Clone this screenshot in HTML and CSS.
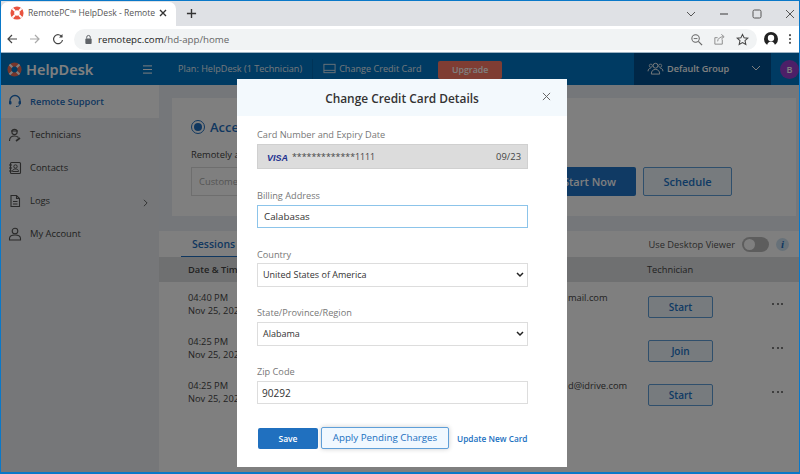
FILE: index.html
```html
<!DOCTYPE html>
<html lang="en">
<head>
<meta charset="utf-8">
<title>RemotePC HelpDesk</title>
<link rel="stylesheet" href="styles.css">
</head>
<body>
<div class="window">
  <div class="tabstrip">
    <div class="tab">
      <svg class="ico16" viewBox="0 0 16 16"><circle cx="8" cy="8" r="7.500" fill="#e8533f"/><circle cx="8" cy="8" r="3.200" fill="#fff"/><path d="M2.700 2.700l3 3M13.300 2.700l-3 3M2.700 13.300l3-3M13.300 13.300l-3-3" stroke="#fff" stroke-width="2.200"/></svg>
      <span class="tab-title">RemotePC™ HelpDesk - Remote</span>
      <svg class="tab-close" viewBox="0 0 10 10"><path d="M2 2l6 6M8 2l-6 6" stroke="#333" stroke-width="1.400"/></svg>
    </div>
    <svg class="newtab" viewBox="0 0 12 12"><path d="M6 1v10M1 6h10" stroke="#333" stroke-width="1.500"/></svg>
    <div class="winctl">
      <svg class="ico12" viewBox="0 0 12 12"><path d="M2 4l4 4 4-4" fill="none" stroke="#555" stroke-width="1"/></svg>
      <svg class="ico12" viewBox="0 0 12 12"><path d="M2 6h8" stroke="#555" stroke-width="1.200"/></svg>
      <svg class="ico12" viewBox="0 0 12 12"><rect x="2" y="2" width="8" height="8" rx="1.500" fill="none" stroke="#555" stroke-width="1"/></svg>
      <svg class="ico12" viewBox="0 0 12 12"><path d="M2 2l8 8M10 2l-8 8" stroke="#555" stroke-width="1"/></svg>
    </div>
  </div>
  <div class="toolbar">
    <svg class="nav" viewBox="0 0 12 12"><path d="M11 6H2M6 2L2 6l4 4" fill="none" stroke="#444" stroke-width="1.200"/></svg>
    <svg class="nav" viewBox="0 0 12 12"><path d="M1 6h9M6 2l4 4-4 4" fill="none" stroke="#aaa" stroke-width="1.200"/></svg>
    <svg class="nav" viewBox="0 0 12 12"><path d="M10 4A4.500 4.500 0 1 0 10.500 7" fill="none" stroke="#444" stroke-width="1.200"/><path d="M10.500 1v3.500H7z" fill="#444"/></svg>
    <div class="omnibox">
      <svg class="lock" viewBox="0 0 10 12"><rect x="1.500" y="5" width="7" height="6" rx="1" fill="#5f6368"/><path d="M3 5V3.500a2 2 0 0 1 4 0V5" fill="none" stroke="#5f6368" stroke-width="1.100"/></svg>
      <span class="url">remotepc.com<span class="url-path">/hd-app/home</span></span>
      <span class="omni-icons">
        <svg class="ico14" viewBox="0 0 14 14"><circle cx="6" cy="6" r="4" fill="none" stroke="#666" stroke-width="1.100"/><path d="M9 9l4 4" stroke="#666" stroke-width="1.300"/><path d="M4 6h4" stroke="#666"/></svg>
        <svg class="ico14" viewBox="0 0 14 14"><path d="M10 7v5H2V5h3M5 9c0-3 3-5 6-5M9 1.500l3 2.500-3 2.500" fill="none" stroke="#888" stroke-width="1"/></svg>
        <svg class="ico14" viewBox="0 0 14 14"><path d="M7 1.500l1.700 3.700 4 .4-3 2.700.9 4L7 10.200l-3.600 2.100.9-4-3-2.700 4-.4z" fill="none" stroke="#444" stroke-width="1.100"/></svg>
      </span>
    </div>
    <svg class="avatar" viewBox="0 0 14 14"><circle cx="7" cy="7" r="7" fill="#222"/><circle cx="7" cy="6" r="3.200" fill="#fff"/><path d="M3 14c0-3 2-4.500 4-4.500s4 1.500 4 4.500" fill="#fff"/></svg>
    <svg class="kebab" viewBox="0 0 4 14"><circle cx="2" cy="2.500" r="1.200" fill="#444"/><circle cx="2" cy="7" r="1.200" fill="#444"/><circle cx="2" cy="11.500" r="1.200" fill="#444"/></svg>
  </div>
  <div class="app">
    <header class="appbar">
      <div class="brand">
        <svg class="brand-ico" viewBox="0 0 16 16"><circle cx="8" cy="8" r="7.500" fill="#ee6a55"/><circle cx="8" cy="8" r="3.200" fill="#0076c6"/><path d="M2.700 2.700l3 3M13.300 2.700l-3 3M2.700 13.300l3-3M13.300 13.300l-3-3" stroke="#fff" stroke-width="2.200"/></svg>
        <span class="brand-name">HelpDesk</span>
      </div>
      <svg class="burger" viewBox="0 0 12 10"><path d="M1 1h10M1 5h10M1 9h10" stroke="#fff" stroke-width="1.100"/></svg>
      <span class="plan">Plan: HelpDesk (1 Technician)</span>
      <span class="bar-sep"></span>
      <span class="ccard">
        <svg class="ccard-ico" viewBox="0 0 14 11"><rect x="1" y="1" width="12" height="9" fill="none" stroke="#d8e6f0" stroke-width="1"/><path d="M1 7.500h12" stroke="#d8e6f0"/></svg>
        Change Credit Card
      </span>
      <span class="upgrade">Upgrade</span>
      <div class="group">
        <svg class="group-ico" viewBox="0 0 18 14"><circle cx="9" cy="4" r="2.600" fill="none" stroke="#fff" stroke-width="1"/><path d="M4.500 13c0-3.500 2-5 4.500-5s4.500 1.500 4.500 5zM1 10c0-2 1-3 3-3.500M17 10c0-2-1-3-3-3.500" fill="none" stroke="#fff" stroke-width="1"/><circle cx="4" cy="4" r="1.700" fill="none" stroke="#fff" stroke-width=".8"/><circle cx="14" cy="4" r="1.700" fill="none" stroke="#fff" stroke-width=".8"/></svg>
        <span class="group-name">Default Group</span>
        <svg class="group-chev" viewBox="0 0 10 6"><path d="M1 1l4 4 4-4" fill="none" stroke="#fff" stroke-width="1"/></svg>
      </div>
      <div class="user"><span class="user-b">B</span></div>
    </header>
    <div class="content">
      <nav class="sidebar">
        <div class="side-item side-active">
          <svg class="side-ico" viewBox="0 0 14 14"><path d="M2 8V6.500a5 5 0 0 1 10 0V8" fill="none" stroke="#1f6fc0" stroke-width="1.300"/><rect x="1" y="7" width="2.500" height="3.500" rx="1" fill="#1f6fc0"/><rect x="10.500" y="7" width="2.500" height="3.500" rx="1" fill="#1f6fc0"/><path d="M11.500 10.500c0 1.500-1.500 2-3.500 2" fill="none" stroke="#1f6fc0"/></svg>
          <span>Remote Support</span>
        </div>
        <div class="side-item">
          <svg class="side-ico" viewBox="0 0 14 14"><circle cx="6.500" cy="4" r="2.600" fill="none" stroke="#555" stroke-width="1.100"/><path d="M1.500 13c0-3.500 2-5 5-5 2 0 3 .5 4 1.500M3 3h7" fill="none" stroke="#555" stroke-width="1.100"/><path d="M8 13l4-3" stroke="#555" stroke-width="1.600"/></svg>
          <span>Technicians</span>
        </div>
        <div class="side-item">
          <svg class="side-ico" viewBox="0 0 14 14"><rect x="2.500" y="1.500" width="10" height="11" rx="1" fill="none" stroke="#555" stroke-width="1.100"/><circle cx="7.500" cy="5.500" r="1.700" fill="none" stroke="#555"/><path d="M4.500 10.500c0-2 1.500-2.500 3-2.500s3 .5 3 2.500zM1 4h3M1 7h3M1 10h3" fill="none" stroke="#555"/></svg>
          <span>Contacts</span>
        </div>
        <div class="side-item">
          <svg class="side-ico" viewBox="0 0 14 14"><path d="M3 1.500h5.500L11.500 4.500v8H3zM8.500 1.500v3h3M5 7.500h4.500M5 10h4.500" fill="none" stroke="#555" stroke-width="1.100"/></svg>
          <span>Logs</span>
          <svg class="side-chev" viewBox="0 0 6 10"><path d="M1 1l4 4-4 4" fill="none" stroke="#555" stroke-width="1.100"/></svg>
        </div>
        <div class="side-item">
          <svg class="side-ico" viewBox="0 0 14 14"><circle cx="7" cy="4" r="2.800" fill="none" stroke="#555" stroke-width="1.100"/><path d="M1.500 13v-1.500c0-2 2-3.500 5.500-3.500s5.500 1.500 5.500 3.500V13z" fill="none" stroke="#555" stroke-width="1.100"/></svg>
          <span>My Account</span>
        </div>
      </nav>
      <main class="main">
        <section class="card">
          <div class="card-title"><span class="radio"><span class="radio-dot"></span></span><span>Accept</span></div>
          <div class="card-sub">Remotely access</div>
          <div class="card-row">
            <div class="customer">Customer</div>
            <button class="btn-primary">Start Now</button>
            <button class="btn-outline">Schedule</button>
          </div>
        </section>
        <section class="sessions">
          <div class="sess-top">
            <span class="sess-tab">Sessions</span>
            <span class="viewer">Use Desktop Viewer</span>
            <span class="toggle"><span class="knob"></span></span>
            <span class="info">i</span>
          </div>
          <div class="row row-head">
            <span class="c-date">Date &amp; Time</span>
            <span class="c-mail"></span>
            <span class="c-tech">Technician</span>
          </div>
          <div class="row">
            <span class="c-date">04:40 PM<br>Nov 25, 2021</span>
            <span class="c-mail">mail.com</span>
            <span class="c-tech"><button class="btn-row">Start</button></span>
            <span class="dots"><i></i><i></i><i></i></span>
          </div>
          <div class="row">
            <span class="c-date">04:25 PM<br>Nov 25, 2021</span>
            <span class="c-mail"></span>
            <span class="c-tech"><button class="btn-row">Join</button></span>
            <span class="dots"><i></i><i></i><i></i></span>
          </div>
          <div class="row">
            <span class="c-date">04:25 PM<br>Nov 25, 2021</span>
            <span class="c-mail">d@idrive.com</span>
            <span class="c-tech"><button class="btn-row">Start</button></span>
            <span class="dots"><i></i><i></i><i></i></span>
          </div>
        </section>
      </main>
    </div>
    <div class="overlay"></div>
    <div class="modal">
      <div class="modal-head">
        <span class="modal-title">Change Credit Card Details</span>
        <svg class="modal-x" viewBox="0 0 10 10"><path d="M1 1l8 8M9 1L1 9" stroke="#666" stroke-width="1.100"/></svg>
      </div>
      <form class="modal-body">
        <div class="field">
          <label class="lbl">Card Number and Expiry Date</label>
          <div class="cardbox">
            <span class="visa">VISA</span>
            <span class="cardnum">*************1111</span>
            <span class="expiry">09/23</span>
          </div>
        </div>
        <div class="field f-bill">
          <label class="lbl">Billing Address</label>
          <div class="inp inp-focus">Calabasas</div>
        </div>
        <div class="field f-country">
          <label class="lbl">Country</label>
          <div class="sel">United States of America
            <svg class="sel-chev" viewBox="0 0 8 6"><path d="M1 1l3 3 3-3" fill="none" stroke="#222" stroke-width="1.500"/></svg>
          </div>
        </div>
        <div class="field f-state">
          <label class="lbl">State/Province/Region</label>
          <div class="sel">Alabama
            <svg class="sel-chev" viewBox="0 0 8 6"><path d="M1 1l3 3 3-3" fill="none" stroke="#222" stroke-width="1.500"/></svg>
          </div>
        </div>
        <div class="field f-zip">
          <label class="lbl">Zip Code</label>
          <div class="inp inp-zip">90292</div>
        </div>
        <div class="actions">
          <span class="save">Save</span>
          <span class="apply">Apply Pending Charges</span>
          <a class="update">Update New Card</a>
        </div>
      </form>
    </div>
  </div>
</div>
</body>
</html>
```
FILE: styles.css
```css
* { box-sizing: border-box; }
html, body { margin: 0; padding: 0; width: 800px; height: 474px; overflow: hidden; }
body { font-family: "Open Sans", "Liberation Sans", sans-serif; color: #333; }
.window { width: 800px; height: 474px; border: solid #0a78c8; border-width: 1px 1px 2px 1px; display: flex; flex-direction: column; background: #fff; overflow: hidden; }

.tabstrip { height: 25px; background: #dfe1e5; display: flex; align-items: center; flex: none; }
.tab { width: 175px; height: 25px; margin-top: 1px; background: #fff; border-radius: 7px 7px 0 0; display: flex; align-items: center; padding: 0 8px 2px 9px; }
.ico16 { width: 14px; height: 14px; flex: none; }
.tab-title { font-size: 8.600px; font-family: "Open Sans", sans-serif; color: #555; margin-left: 4px; white-space: nowrap; width: 126px; flex: none; }
.tab-close { width: 10px; height: 10px; margin-left: 4px; flex: none; }
.newtab { width: 11px; height: 11px; margin-left: 10px; flex: none; }
.winctl { margin-left: auto; display: flex; gap: 21px; padding-right: 3px; align-items: center; }
.ico12 { width: 12px; height: 12px; }

.toolbar { height: 27px; background: #fff; display: flex; align-items: center; flex: none; border-bottom: 1px solid #9db3c4; padding-left: 5px; }
.nav { width: 12px; height: 12px; margin-right: 11px; flex: none; }
.omnibox { width: 683px; height: 21px; margin-left: -1px; border-radius: 11px; background: #f1f3f4; display: flex; align-items: center; padding: 0 8px 0 10px; flex: none; }
.lock { width: 9px; height: 11px; flex: none; }
.url { font-size: 9.700px; margin-left: 5px; color: #222; }
.url-path { color: #666; }
.omni-icons { margin-left: auto; display: flex; gap: 10px; }
.ico14 { width: 13px; height: 13px; }
.avatar { width: 14px; height: 14px; margin-left: 7px; flex: none; }
.kebab { width: 4px; height: 12px; margin-left: 10px; flex: none; }

.app { position: relative; flex: 1; display: flex; flex-direction: column; min-height: 0; }
.appbar { height: 32px; flex: none; background: #0076c6; color: #fff; display: flex; align-items: center; }
.brand { display: flex; align-items: center; width: 141px; padding-left: 6px; flex: none; }
.brand-ico { width: 15px; height: 15px; flex: none; }
.brand-name { font-size: 14.500px; font-weight: 600; margin-left: 4px; font-family: "Noto Sans", sans-serif; }
.burger { width: 11px; height: 9px; flex: none; }
.plan { font-size: 9.100px; margin: 0 0 2px 25px; white-space: nowrap; color: #e6eff6; }
.bar-sep { width: 1px; height: 20px; background: #0069b0; margin: 0 10px; flex: none; }
.ccard { font-size: 9.100px; display: flex; align-items: center; gap: 3px; color: #e6eff6; white-space: nowrap; width: 115px; flex: none; margin-bottom: 2px; }
.ccard-ico { width: 13px; height: 11px; flex: none; }
.upgrade { width: 64px; height: 18px; background: #ff7a66; border-radius: 2px; font-size: 8.800px; font-weight: 600; text-align: center; line-height: 18px; flex: none; margin-top: 1px; }
.group { margin-left: auto; width: 137px; height: 32px; background: #004f8e; display: flex; align-items: center; padding: 0 0 2px 13px; flex: none; }
.group-ico { width: 17px; height: 13px; flex: none; }
.group-name { font-size: 9.100px; font-weight: 600; margin-left: 3px; white-space: nowrap; }
.group-chev { width: 10px; height: 6px; margin-left: 22px; flex: none; }
.user { width: 28px; height: 32px; display: flex; align-items: center; justify-content: flex-end; flex: none; }
.user-b { width: 19px; height: 19px; border-radius: 50%; background: #9a3fd0; font-size: 9px; font-weight: 600; text-align: center; line-height: 19px; }

.content { flex: 1; display: flex; min-height: 0; background: #ebeff4; }
.sidebar { width: 158px; flex: none; background: #eceff2; }
.side-item { height: 33px; display: flex; align-items: center; padding: 0 0 0 7px; font-size: 9.400px; color: #444; }
.side-item span { margin-left: 8px; }
.side-active { background: #fff; color: #1f6fc0; font-weight: 600; padding-bottom: 1px; }
.side-ico { width: 14px; height: 14px; flex: none; }
.side-chev { width: 5px; height: 8px; margin-left: auto; margin-right: 11px; margin-top: 4px; flex: none; }

.main { flex: 1; min-width: 0; background: #ebeff4; padding: 13px 0 0 0; }
.card { height: 118px; margin: 0 3px 0 13px; background: #fff; padding: 20px 0 0 19px; }
.card-title { display: flex; align-items: center; gap: 5px; font-size: 13px; font-weight: 600; color: #1f6fc0; height: 18px; }
.radio { width: 14px; height: 14px; border-radius: 50%; border: 1.500px solid #1f6fc0; display: flex; align-items: center; justify-content: center; flex: none; }
.radio-dot { width: 8px; height: 8px; border-radius: 50%; background: #1f6fc0; }
.card-sub { font-size: 9.400px; margin-top: 12px; color: #444; white-space: nowrap; line-height: 14px; }
.card-row { display: flex; align-items: center; margin-top: 5px; height: 29px; }
.customer { width: 331px; height: 29px; border: 1px solid #ddd; font-size: 9.400px; color: #aaa; padding: 7px 0 0 7px; flex: none; }
.btn-primary { width: 109px; height: 29px; margin-left: 5px; background: #2075c8; color: #fff; border: 0; border-radius: 2px; font: 600 11px "Open Sans", sans-serif; text-align: right; padding-right: 20px; flex: none; }
.btn-outline { width: 89px; height: 29px; margin-left: 7px; background: #eef6fc; color: #2075c8; border: 1px solid #5f9fd8; border-radius: 2px; font: 600 11px "Open Sans", sans-serif; flex: none; }

.sessions { margin-top: 15px; background: #fff; height: 243px; }
.sess-top { height: 26px; display: flex; align-items: center; position: relative; font-size: 9.300px; }
.sess-tab { margin-left: 33px; color: #1f6fc0; font-size: 10.500px; font-weight: 600; }
.sess-tab::after { content: ""; position: absolute; left: 22px; top: 25px; width: 70px; height: 2px; background: #1f6fc0; }
.viewer { margin-left: auto; color: #555; white-space: nowrap; }
.toggle { width: 27px; height: 15px; border-radius: 8px; background: #bbb; margin-left: 7px; display: flex; align-items: center; padding-left: 2px; flex: none; }
.knob { width: 11px; height: 11px; border-radius: 50%; background: #fff; }
.info { width: 13px; height: 13px; border-radius: 50%; background: #cfe3f3; color: #1f6fc0; font: italic bold 11px/13px "Liberation Serif", serif; text-align: center; margin: 0 10px 0 7px; flex: none; }
.row { display: flex; align-items: center; height: 44px; font-size: 9.300px; color: #444; line-height: 13px; position: relative; }
.row-head { height: 25px; background: #dfe1e3; font-weight: 600; }
.row-head .c-tech { font-weight: 400; }
.c-date { margin-left: 29px; width: 380px; flex: none; white-space: nowrap; }
.c-mail { width: 79px; flex: none; margin-top: -14px; }
.c-tech { flex: none; }
.btn-row { width: 65px; height: 22px; background: #eef6fc; color: #2075c8; border: 1px solid #5f9fd8; border-radius: 2px; font: 600 10px "Open Sans", sans-serif; padding: 0; margin-left: 1px; margin-top: 5px; }
.dots { display: flex; gap: 2.500px; margin-left: 59px; margin-top: -1px; flex: none; }
.dots i { width: 2px; height: 2px; border-radius: 50%; background: #555; }

.overlay { position: absolute; inset: 0; background: rgba(0, 0, 0, .5); }
.modal { position: absolute; left: 236px; top: 26px; width: 330px; height: 388px; background: #fff; }
.modal-head { height: 37px; background: #f3f9fd; display: flex; align-items: center; justify-content: center; position: relative; }
.modal-title { font-size: 11.900px; font-weight: 600; color: #333; }
.modal-x { position: absolute; left: 305px; top: 13px; width: 9px; height: 9px; }
.modal-body { display: block; padding: 12px 39px 0 20px; }
.lbl { display: block; font-size: 9.200px; line-height: 14px; color: #777; height: 16px; }
.field { display: block; }
.cardbox { height: 25px; background: #dcdcdc; border: 1px solid #d0d0d0; display: flex; align-items: center; padding: 0 6px 0 9px; font-size: 9.400px; color: #444; }
.visa { font: italic bold 9px "Liberation Sans", sans-serif; color: #22318f; width: 25px; flex: none; margin-top: 2px; }
.cardnum { font-size: 8.800px; }
.expiry { margin-left: auto; }
.inp { height: 23px; border: 1px solid #ddd; font-size: 9.800px; line-height: 22px; padding-left: 6px; color: #333; }
.inp-focus { border-color: #8cc4ea; }
.inp-zip { font-size: 10.100px; padding-left: 4px; }
.sel { height: 24px; border: 1px solid #ddd; font-size: 9px; line-height: 22px; padding-left: 5px; color: #333; display: flex; justify-content: space-between; align-items: center; padding-right: 3px; }
.sel-chev { width: 8px; height: 6px; flex: none; }
.f-bill { margin-top: 20px; }
.f-country { margin-top: 20px; }
.f-country .lbl { height: 15px; }
.f-state { margin-top: 19px; }
.f-zip { margin-top: 19px; }
.actions { display: flex; align-items: center; margin-top: 23px; padding-left: 1px; white-space: nowrap; }
.save { width: 60px; height: 21px; background: #2070bf; color: #fff; border-radius: 2px; font-size: 8.500px; font-weight: 600; text-align: center; line-height: 21px; flex: none; }
.apply { width: 128px; height: 22px; margin-left: 3px; background: #f0f8ff; color: #2070bf; border: 1px solid #5f9fd8; border-radius: 2px; font-size: 9.750px; text-align: center; line-height: 20px; box-shadow: 0 0 5px rgba(0,0,0,.2); flex: none; }
.update { margin-left: 8px; font-size: 8.300px; font-weight: 600; color: #2070bf; }
```
